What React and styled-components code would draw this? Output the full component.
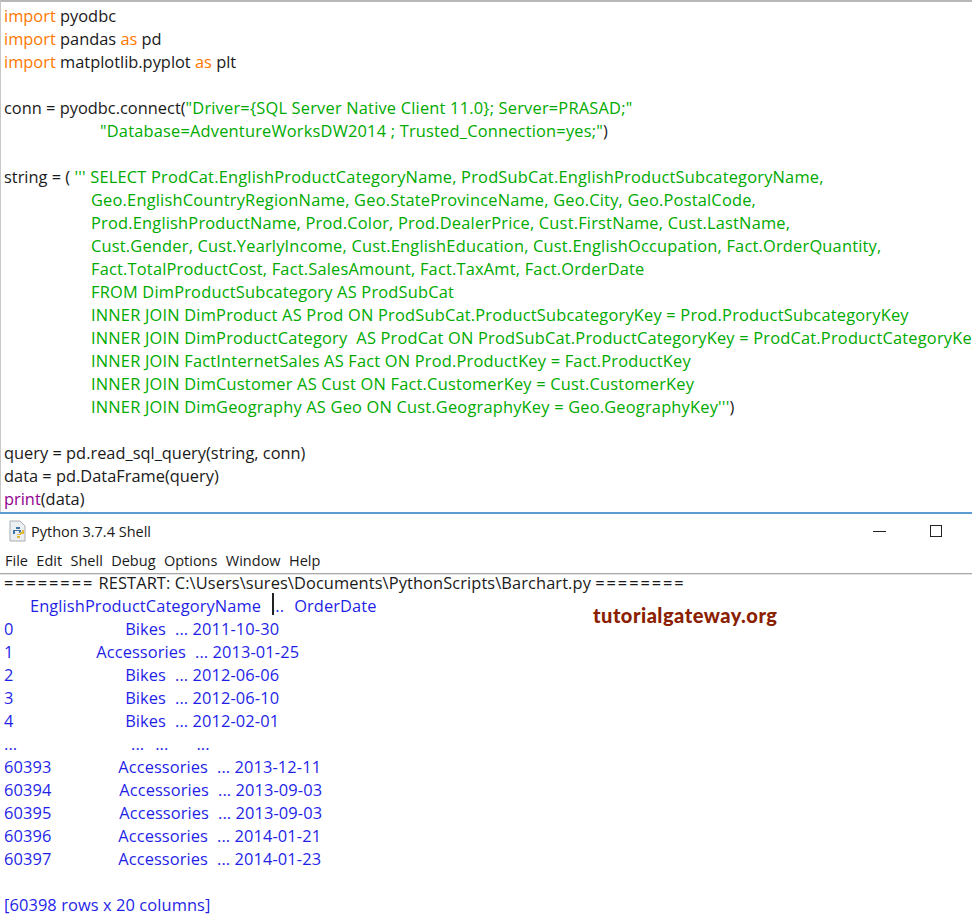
import React from 'react';
import styled, { createGlobalStyle } from 'styled-components';

const GlobalStyle = createGlobalStyle`
	html, body {
		margin: 0;
		padding: 0;
		background: #fff;
	}
	body {
		font-family: 'Open Sans', 'Noto Sans', sans-serif;
		font-size: 16.4px;
		font-weight: 500;
		color: #1a1a1a;
	}
`;

const Page = styled.div`
	width: 972px;
	height: 920px;
	overflow: hidden;
	background: #fff;
`;

const Editor = styled.section`
	height: 512px;
	box-sizing: border-box;
	border-top: 2px solid #b8b8b8;
	border-left: 1px solid #c8c8c8;
	padding: 1.5px 0 0 3px;
	background: #fff;
`;

const Line = styled.div`
	height: 23px;
	line-height: 23px;
	white-space: pre;
	padding-left: ${(p) => p.$indent || 0}px;
`;

const Kw = styled.span`
	color: #ff7700;
`;

const Str = styled.span`
	color: #00aa00;
	letter-spacing: 0.2px;
`;

const Builtin = styled.span`
	color: #900090;
`;

const Shell = styled.section`
	border-top: 2px solid #5b9bd0;
`;

const TitleBar = styled.div`
	height: 34px;
	display: flex;
	align-items: center;
	padding: 0 30px 0 8px;
`;

const AppIcon = styled.svg`
	width: 20px;
	height: 22px;
	margin-right: 3px;
`;

const Title = styled.div`
	flex: 1;
	font-size: 14.5px;
	font-weight: 400;
`;

const WinButtons = styled.div`
	display: flex;
	align-items: center;
	gap: 44px;
`;

const MinBtn = styled.div`
	width: 13px;
	height: 1px;
	background: #222;
`;

const MaxBtn = styled.div`
	width: 10px;
	height: 10px;
	border: 1.5px solid #222;
`;

const MenuBar = styled.nav`
	height: 25px;
	display: flex;
	align-items: center;
	gap: 8.4px;
	padding: 0 5px;
	font-size: 14.5px;
	font-weight: 400;
	border-bottom: 1px solid #a8a8a8;
	box-shadow: 0 1px 0 #e4e4e4;
`;

const Output = styled.div`
	position: relative;
	margin-top: -3px;
	padding-left: 4px;
`;

const OutLine = styled(Line)`
	color: ${(p) => (p.$plain ? '#1a1a1a' : '#1f1fe8')};
	letter-spacing: 0.1px;
`;

const Equals = styled.span`
	letter-spacing: 1.9px;
`;

const IdCell = styled.span`
	position: absolute;
	left: 4px;
`;

const NameCell = styled.span`
	display: inline-block;
	width: ${(p) => p.$w}px;
	text-align: right;
`;

const Gap = styled.span`
	display: inline-block;
	width: ${(p) => p.$w}px;
`;

const Caret = styled.div`
	position: absolute;
	left: 272px;
	top: 22px;
	width: 1.5px;
	height: 22px;
	background: #222;
`;

const Brand = styled.div`
	position: absolute;
	left: 593px;
	top: 32px;
	font-family: 'Lato', sans-serif;
	font-size: 20px;
	font-weight: 900;
	letter-spacing: 0.5px;
	line-height: 24px;
	color: #8a2000;
`;

const rows = [
	['0', 'Bikes', '2011-10-30', 162],
	['1', 'Accessories', '2013-01-25', 182],
	['2', 'Bikes', '2012-06-06', 162],
	['3', 'Bikes', '2012-06-10', 162],
	['4', 'Bikes', '2012-02-01', 162],
];

const tail = [
	['60393', 'Accessories', '2013-12-11', 204],
	['60394', 'Accessories', '2013-09-03', 205],
	['60395', 'Accessories', '2013-09-03', 205],
	['60396', 'Accessories', '2014-01-21', 204],
	['60397', 'Accessories', '2014-01-23', 204],
];

function DataRow({ row }) {
	const [id, name, date, width] = row;
	return (
		<OutLine>
			<IdCell>{id}</IdCell>
			<NameCell $w={width}>{name}</NameCell>
			<Gap $w={9} />
			{'... '}
			{date}
		</OutLine>
	);
}

export default function App() {
	return (
		<Page>
			<GlobalStyle />
			<Editor>
				<Line><Kw>import</Kw> pyodbc</Line>
				<Line><Kw>import</Kw> pandas <Kw>as</Kw> pd</Line>
				<Line><Kw>import</Kw> matplotlib.pyplot <Kw>as</Kw> plt</Line>
				<Line />
				<Line>conn = pyodbc.connect(<Str>"Driver={'{'}SQL Server Native Client 11.0{'}'}; Server=PRASAD;"</Str></Line>
				<Line $indent={96}><Str>"Database=AdventureWorksDW2014 ; Trusted_Connection=yes;"</Str>)</Line>
				<Line />
				<Line>string = ( <Str>''' SELECT ProdCat.EnglishProductCategoryName, ProdSubCat.EnglishProductSubcategoryName,</Str></Line>
				<Line $indent={87}><Str>Geo.EnglishCountryRegionName, Geo.StateProvinceName, Geo.City, Geo.PostalCode,</Str></Line>
				<Line $indent={87}><Str>Prod.EnglishProductName, Prod.Color, Prod.DealerPrice, Cust.FirstName, Cust.LastName,</Str></Line>
				<Line $indent={87}><Str>Cust.Gender, Cust.YearlyIncome, Cust.EnglishEducation, Cust.EnglishOccupation, Fact.OrderQuantity,</Str></Line>
				<Line $indent={87}><Str>Fact.TotalProductCost, Fact.SalesAmount, Fact.TaxAmt, Fact.OrderDate</Str></Line>
				<Line $indent={87}><Str>FROM DimProductSubcategory AS ProdSubCat</Str></Line>
				<Line $indent={87}><Str>INNER JOIN DimProduct AS Prod ON ProdSubCat.ProductSubcategoryKey = Prod.ProductSubcategoryKey</Str></Line>
				<Line $indent={87}><Str>INNER JOIN DimProductCategory  AS ProdCat ON ProdSubCat.ProductCategoryKey = ProdCat.ProductCategoryKey</Str></Line>
				<Line $indent={87}><Str>INNER JOIN FactInternetSales AS Fact ON Prod.ProductKey = Fact.ProductKey</Str></Line>
				<Line $indent={87}><Str>INNER JOIN DimCustomer AS Cust ON Fact.CustomerKey = Cust.CustomerKey</Str></Line>
				<Line $indent={87}><Str>INNER JOIN DimGeography AS Geo ON Cust.GeographyKey = Geo.GeographyKey'''</Str>)</Line>
				<Line />
				<Line>query = pd.read_sql_query(string, conn)</Line>
				<Line>data = pd.DataFrame(query)</Line>
				<Line><Builtin>print</Builtin>(data)</Line>
			</Editor>
			<Shell>
				<TitleBar>
					<AppIcon viewBox='0 0 20 22'>
						<path d='M2 1h10l5 5v15H2z' fill='#eceff2' stroke='#a8adb3' />
						<path d='M8 7h4v2H8v1h5v3h-2v-2H7v3H5v-4h3z' fill='#3f74a3' />
						<path d='M12 12h2v-2h2v4h-3v1h-4v3h3v-2H9v-2h3z' fill='#e0b93a' />
					</AppIcon>
					<Title>Python 3.7.4 Shell</Title>
					<WinButtons>
						<MinBtn />
						<MaxBtn />
					</WinButtons>
				</TitleBar>
				<MenuBar>
					{['File', 'Edit', 'Shell', 'Debug', 'Options', 'Window', 'Help'].map((m) => (
						<span key={m}>{m}</span>
					))}
				</MenuBar>
				<Output>
					<OutLine $plain>
						<Equals>========</Equals> RESTART: C:\Users\sures\Documents\PythonScripts\Barchart.py <Equals>========</Equals>
					</OutLine>
					<OutLine $indent={26}>
						EnglishProductCategoryName<Gap $w={10} />...<Gap $w={10} />OrderDate
					</OutLine>
					{rows.map((r) => (
						<DataRow key={r[0]} row={r} />
					))}
					<OutLine>
						<IdCell>...</IdCell>
						<Gap $w={127} />...<Gap $w={11} />...<Gap $w={28} />...
					</OutLine>
					{tail.map((r) => (
						<DataRow key={r[0]} row={r} />
					))}
					<Line />
					<OutLine>[60398 rows x 20 columns]</OutLine>
					<Caret />
					<Brand>tutorialgateway.org</Brand>
				</Output>
			</Shell>
		</Page>
	);
}
